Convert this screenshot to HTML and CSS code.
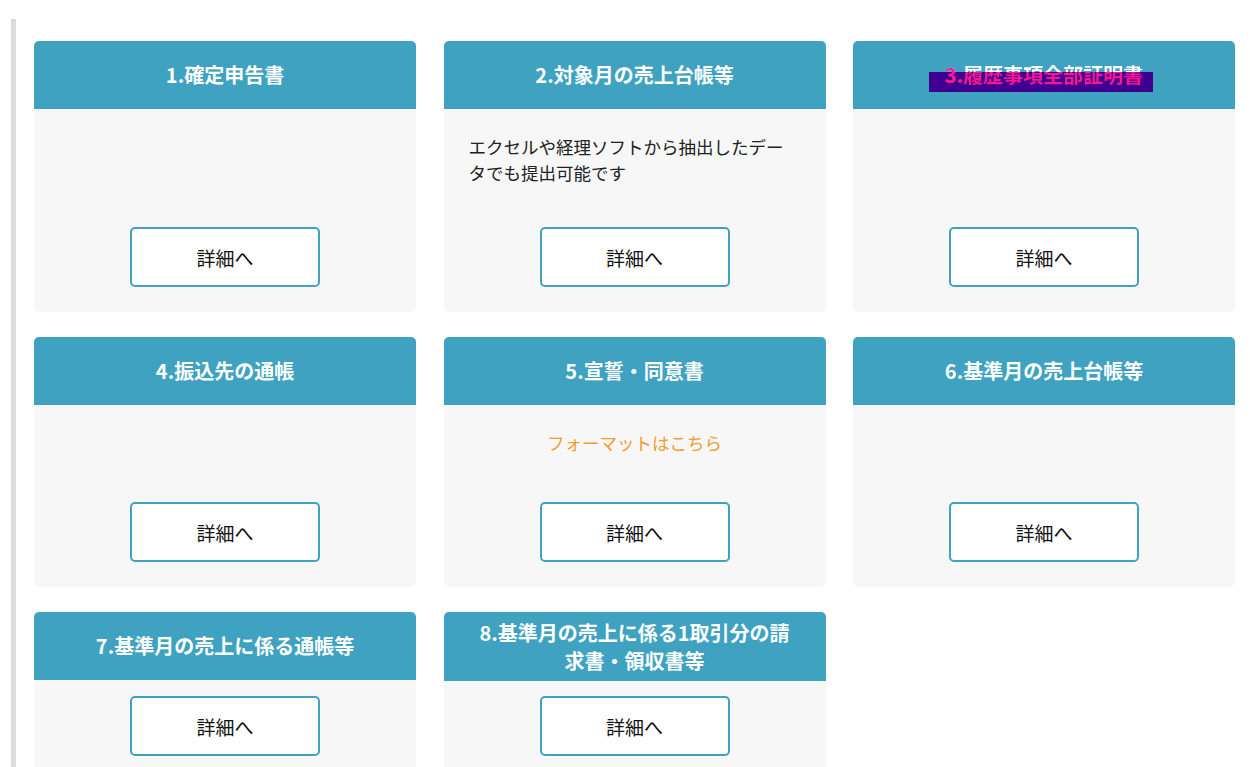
FILE: index.html
```html
<!DOCTYPE html>
<html lang="ja">
<head>
<meta charset="utf-8">
<title>必要書類</title>
<link rel="stylesheet" href="styles.css">
</head>
<body>
<div class="wrap">
  <div class="grid">
    <section class="card">
      <h2 class="card-head">1.確定申告書</h2>
      <div class="card-body">
        <a class="btn" href="#">詳細へ</a>
      </div>
    </section>
    <section class="card">
      <h2 class="card-head">2.対象月の売上台帳等</h2>
      <div class="card-body">
        <p class="note">エクセルや経理ソフトから抽出したデータでも提出可能です</p>
        <a class="btn" href="#">詳細へ</a>
      </div>
    </section>
    <section class="card">
      <h2 class="card-head hl-head"><span class="hl"><span class="hl-num">3.</span>履歴事項全部証明書</span></h2>
      <div class="card-body">
        <a class="btn" href="#">詳細へ</a>
      </div>
    </section>
    <section class="card">
      <h2 class="card-head">4.振込先の通帳</h2>
      <div class="card-body">
        <a class="btn" href="#">詳細へ</a>
      </div>
    </section>
    <section class="card">
      <h2 class="card-head">5.宣誓・同意書</h2>
      <div class="card-body">
        <p class="format"><a href="#">フォーマットはこちら</a></p>
        <a class="btn" href="#">詳細へ</a>
      </div>
    </section>
    <section class="card">
      <h2 class="card-head">6.基準月の売上台帳等</h2>
      <div class="card-body">
        <a class="btn" href="#">詳細へ</a>
      </div>
    </section>
    <section class="card">
      <h2 class="card-head">7.基準月の売上に係る通帳等</h2>
      <div class="card-body">
        <a class="btn" href="#">詳細へ</a>
      </div>
    </section>
    <section class="card">
      <h2 class="card-head">8.基準月の売上に係る1取引分の請求書・領収書等</h2>
      <div class="card-body">
        <a class="btn" href="#">詳細へ</a>
      </div>
    </section>
  </div>
</div>
</body>
</html>
```

FILE: styles.css
```css
html {
  overflow: hidden;
}
body {
  margin: 0;
  background: #fff;
  font-family: "Noto Sans CJK JP", "Noto Sans", sans-serif;
  color: #222;
}
.wrap {
  margin: 19px 0 0 11px;
  border-left: 5px solid #dcdcdc;
  padding: 22px 0 0 18px;
  min-height: 800px;
}
.grid {
  display: grid;
  grid-template-columns: 382px 382px 382px;
  column-gap: 27.5px;
  row-gap: 25px;
}
.card {
  display: flex;
  flex-direction: column;
  background: #f7f7f7;
  border-radius: 5px;
  overflow: hidden;
}
.card-head {
  margin: 0;
  min-height: 68px;
  box-sizing: border-box;
  padding: 6.5px 30px;
  display: flex;
  align-items: center;
  justify-content: center;
  text-align: center;
  background: #3ea2c0;
  color: #fff;
  font-size: 20px;
  font-weight: 700;
  line-height: 28px;
}
.hl-head {
  isolation: isolate;
}
.hl {
  position: relative;
  color: transparent;
  background: linear-gradient(to bottom, #fff 0, #fff 11px, #ff1493 11px, #ff1493 100%);
  -webkit-background-clip: text;
  background-clip: text;
}
.hl::before {
  content: "";
  position: absolute;
  left: -16px;
  right: -10px;
  top: 11px;
  height: 20px;
  background: #3f0090;
  z-index: -1;
}
.hl-num {
  -webkit-text-fill-color: #ff1493;
}
.card-body {
  flex: 1;
  display: flex;
  flex-direction: column;
  padding: 15px 25px 25px;
}
.note {
  margin: 10px 0 41px;
  font-size: 17.5px;
  line-height: 26px;
  max-width: 322px;
  color: #222;
}
.format {
  margin: 10px 0 46px;
  text-align: center;
  font-size: 17.5px;
  line-height: 26px;
}
.format a {
  color: #f39c30;
  text-decoration: none;
}
.btn {
  margin-top: auto;
  align-self: center;
  width: 190px;
  height: 60px;
  box-sizing: border-box;
  border: 2px solid #3ea2c0;
  border-radius: 5px;
  background: #fff;
  color: #111;
  text-decoration: none;
  font-size: 19px;
  display: flex;
  align-items: center;
  justify-content: center;
}
```
